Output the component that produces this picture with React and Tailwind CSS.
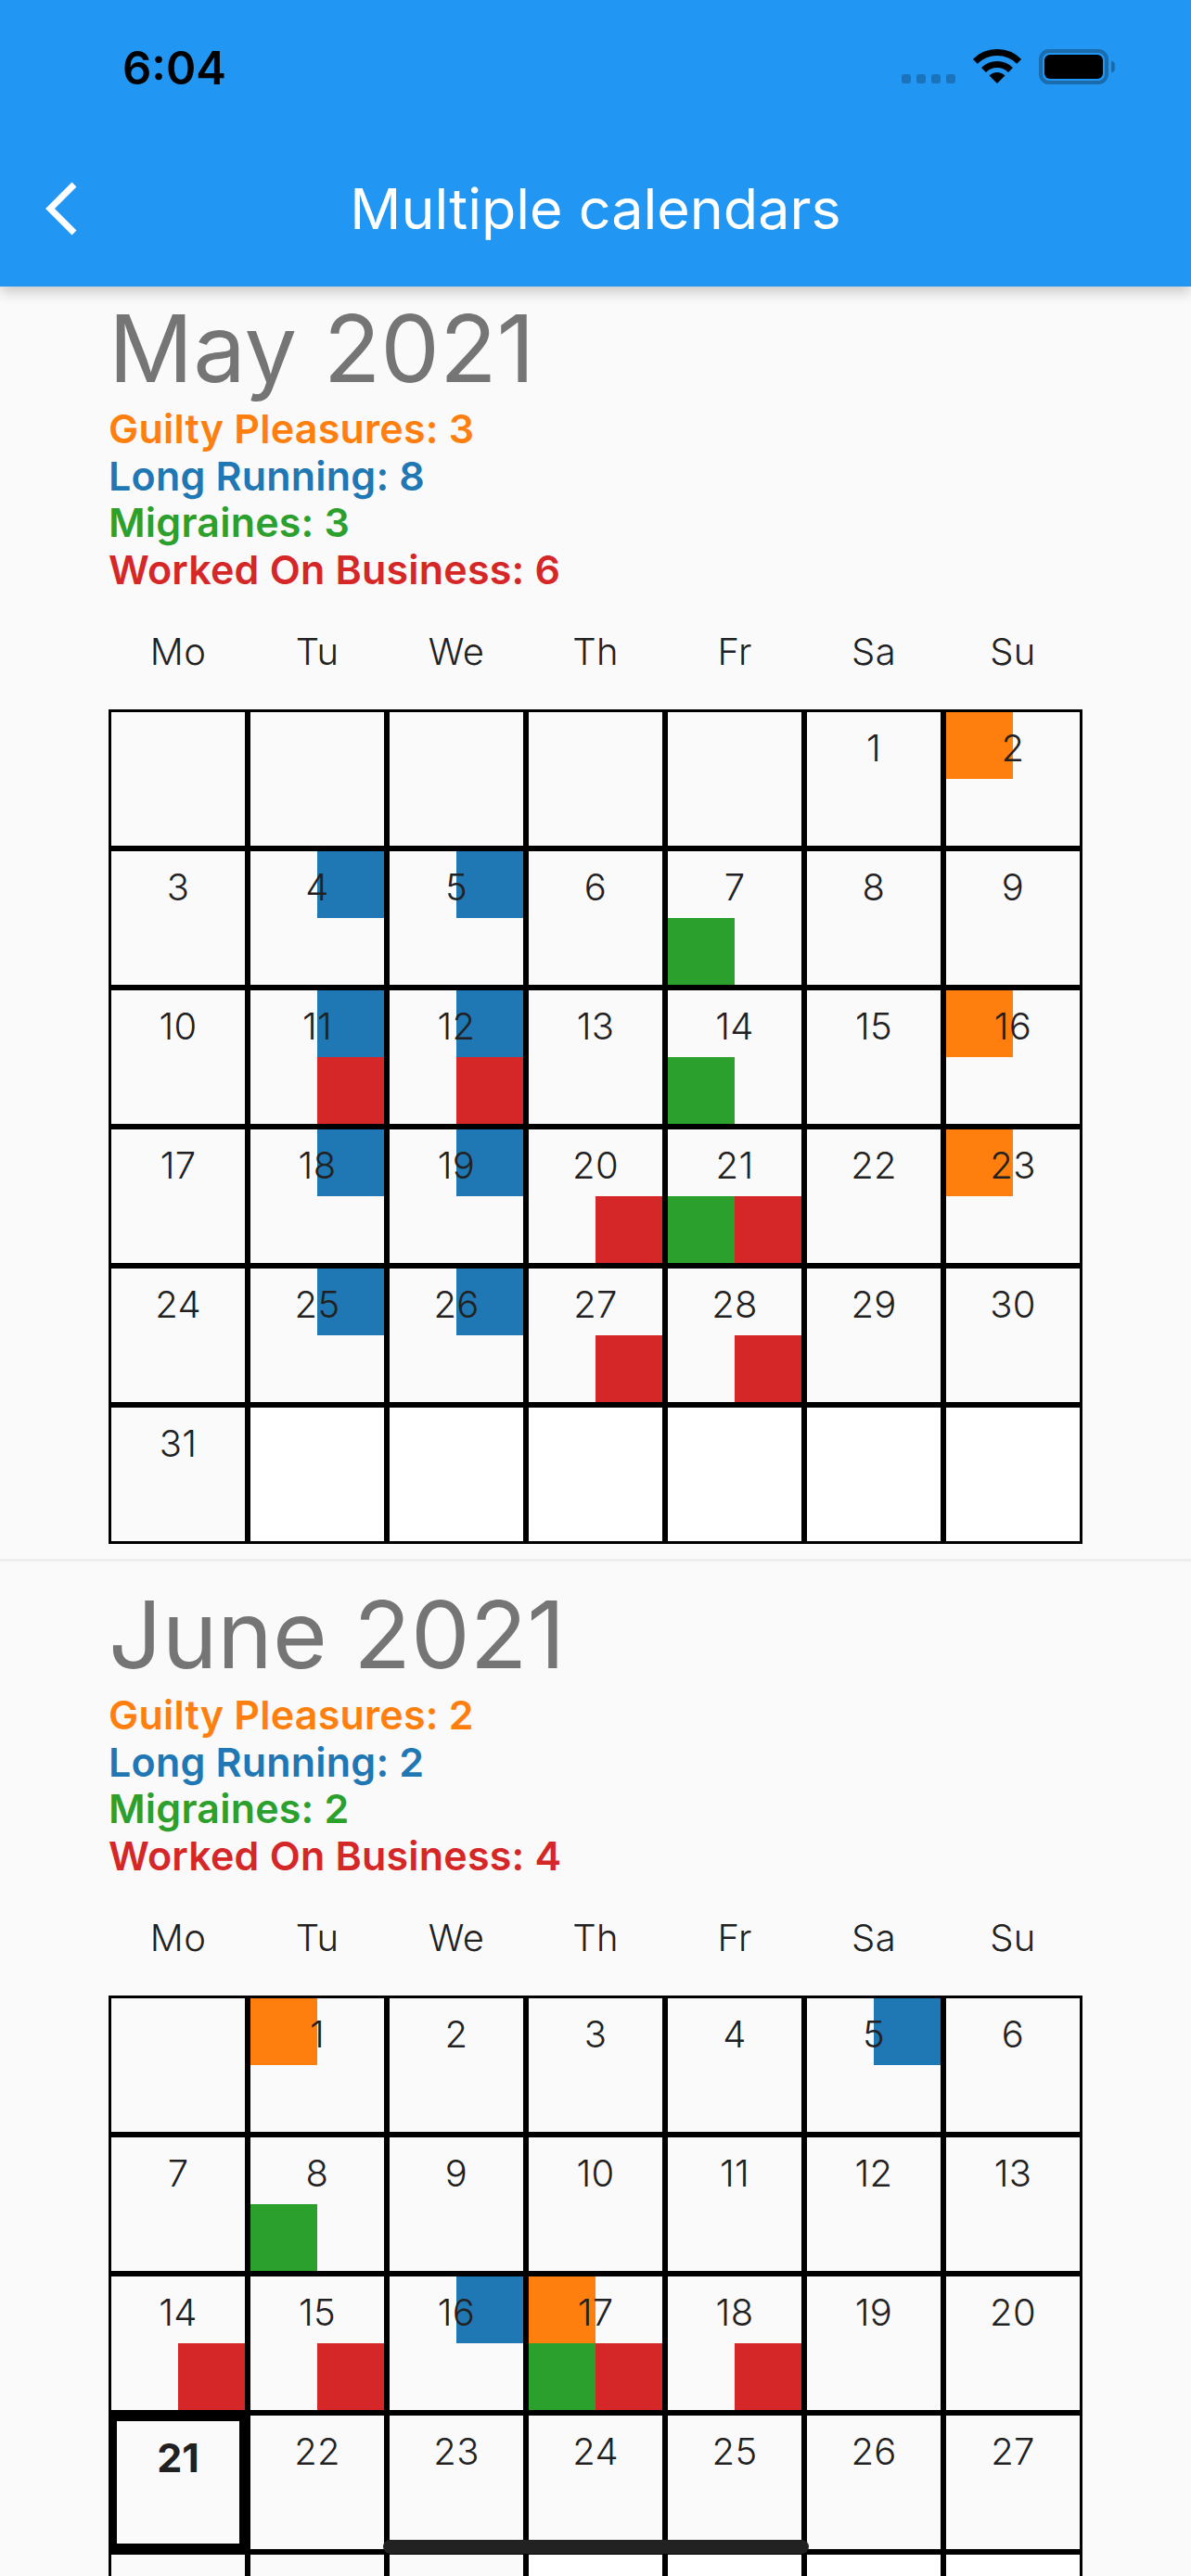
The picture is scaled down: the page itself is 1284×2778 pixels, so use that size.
import React from 'react';

const ORANGE = 'bg-[#ff7f0e]';
const BLUE = 'bg-[#1f77b4]';
const GREEN = 'bg-[#2ca02c]';
const RED = 'bg-[#d62728]';

const WEEK_DAYS = ['Mo', 'Tu', 'We', 'Th', 'Fr', 'Sa', 'Su'];

const months = [
  {
    title: 'May 2021',
    lead: 5,
    days: 31,
    trail: 6,
    counts: [3, 8, 3, 6],
    events: {
      2: 'o', 4: 'b', 5: 'b', 7: 'g', 11: 'br', 12: 'br', 14: 'g', 16: 'o', 18: 'b', 19: 'b',
      20: 'r', 21: 'gr', 23: 'o', 25: 'b', 26: 'b', 27: 'r', 28: 'r',
    },
  },
  {
    title: 'June 2021',
    lead: 1,
    days: 30,
    trail: 4,
    today: 21,
    counts: [2, 2, 2, 4],
    events: { 1: 'o', 5: 'b', 8: 'g', 14: 'r', 15: 'r', 16: 'b', 17: 'ogr', 18: 'r' },
  },
];

const legend = [
  { label: 'Guilty Pleasures', color: 'text-[#ff7f0e]' },
  { label: 'Long Running', color: 'text-[#1f77b4]' },
  { label: 'Migraines', color: 'text-[#2ca02c]' },
  { label: 'Worked On Business', color: 'text-[#d62728]' },
];

function DayCell({ day, marks = '', today, blank }) {
  return (
    <div
      className={`relative h-[150px] w-[150px] grid grid-cols-2 grid-rows-2 border-black ${today ? 'border-[9px]' : 'border-[3px]'} ${blank ? 'bg-white' : ''}`}
    >
      <div className={marks.includes('o') ? ORANGE : ''} />
      <div className={marks.includes('b') ? BLUE : ''} />
      <div className={marks.includes('g') ? GREEN : ''} />
      <div className={marks.includes('r') ? RED : ''} />
      {day && (
        <span className={`absolute inset-x-0 top-[14px] text-center leading-[50px] text-[#212121] ${today ? 'text-[43px] font-bold' : 'text-[40px] font-[350] tracking-[0.3px]'}`}>
          {day}
        </span>
      )}
    </div>
  );
}

function Month({ month }) {
  const dayNumbers = Array.from({ length: month.days }, (_, i) => i + 1);
  return (
    <section className="h-[1387px] shrink-0 border-b-[3px] border-[#eeeeee] pl-[117px]">
      <h2 className="h-[140px] text-[101px] leading-[157px] font-normal text-[#757575]">{month.title}</h2>
      <div className="flex flex-col">
        {legend.map((item, i) => (
          <p key={item.label} className={`h-[50.5px] text-[43px] leading-[50px] tracking-[0.2px] font-semibold ${item.color}`}>
            {item.label}: {month.counts[i]}
          </p>
        ))}
      </div>
      <div className="mt-[1px] grid w-[1050px] grid-cols-7 h-[125px] items-center text-center text-[40px] tracking-[0.3px] font-[350] text-[#212121]">
        {WEEK_DAYS.map((d) => (
          <span key={d}>{d}</span>
        ))}
      </div>
      <div className="grid w-[1050px] grid-cols-7">
        {Array.from({ length: month.lead }, (_, i) => (
          <DayCell key={`lead-${i}`} />
        ))}
        {dayNumbers.map((d) => (
          <DayCell key={d} day={d} marks={month.events[d]} today={month.today === d} />
        ))}
        {Array.from({ length: month.trail }, (_, i) => (
          <DayCell key={`trail-${i}`} blank />
        ))}
      </div>
    </section>
  );
}

function StatusIcons() {
  return (
    <div className="flex items-end gap-[19px]">
      <div className="flex gap-[6px] pb-[1px]">
        {[0, 1, 2, 3].map((i) => (
          <div key={i} className="h-[10px] w-[10px] rounded-[3px] bg-[#1a73bb]" />
        ))}
      </div>
      <svg width="52" height="37" viewBox="0 0 51 37" className="mb-[1px]">
        <path d="M1.81 13.31A33.5 33.5 0 0 1 49.19 13.31" fill="none" stroke="#000" strokeWidth="7" />
        <path d="M11 22.5A20.5 20.5 0 0 1 40 22.5" fill="none" stroke="#000" strokeWidth="7" />
        <path d="M25.5 37L17 28.5A12 12 0 0 1 34 28.5Z" fill="#000" />
      </svg>
      <div className="flex items-center">
        <div className="h-[38px] w-[75px] rounded-[11px] border-[4px] border-[#1a6cad] p-[2px]">
          <div className="h-full w-full rounded-[6px] bg-black" />
        </div>
        <div className="ml-[3px] h-[12px] w-[4px] rounded-r-full bg-[#1a6cad]" />
      </div>
    </div>
  );
}

export default function App() {
  return (
    <div className="relative flex h-[2778px] w-[1284px] flex-col overflow-hidden bg-[#fafafa] font-['Inter',sans-serif]">
      <header className="relative z-10 h-[309px] shrink-0 bg-[#2196f3] shadow-[0_6px_14px_rgba(0,0,0,0.2)]">
        <div className="flex h-[132px] items-start justify-between pl-[132px] pr-[82px] pt-[45px]">
          <span className="text-[49px] leading-[58px] font-semibold text-black">6:04</span>
          <div className="pt-[8px]">
            <StatusIcons />
          </div>
        </div>
        <div className="relative flex h-[177px] items-start justify-center pt-[58px]">
          <button className="absolute left-[46px] top-[60px] text-white">
            <svg width="40" height="64" viewBox="0 0 40 64" fill="none">
              <path d="M34 7L8 33L34 59" stroke="currentColor" strokeWidth="7" />
            </svg>
          </button>
          <h1 className="text-[61px] leading-[70px] font-normal text-white">Multiple calendars</h1>
        </div>
      </header>
      <main className="-mt-[12px] flex flex-col">
        {months.map((m) => (
          <Month key={m.title} month={m} />
        ))}
      </main>
      <div className="absolute bottom-[24px] left-[413px] h-[15px] w-[459px] rounded-full bg-[#222222]" />
    </div>
  );
}
